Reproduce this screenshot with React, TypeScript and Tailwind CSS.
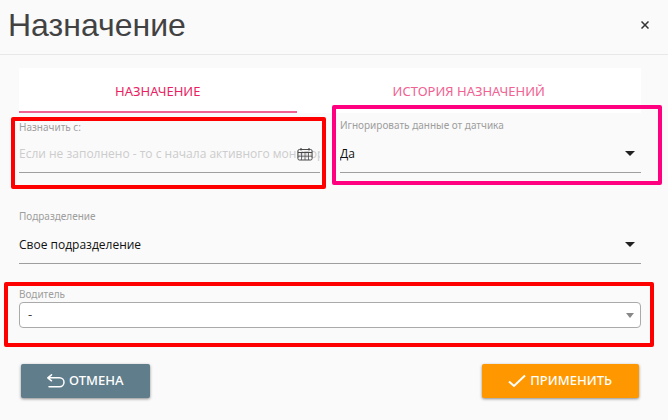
import React, { useState } from 'react';

type SelectFieldProps = {
  id: string;
  label: string;
  options: string[];
};

const SelectField: React.FC<SelectFieldProps> = ({ id, label, options }) => {
  const [value, setValue] = useState(options[0]);

  return (
    <div className="flex flex-col gap-1">
      <label htmlFor={id} className="text-[10px] leading-4 text-[#9e9e9e]">{label}</label>
      <div className="relative">
        <select
          id={id}
          value={value}
          onChange={(e) => setValue(e.target.value)}
          className="block h-9 w-full appearance-none border-b border-[#9e9e9e] bg-transparent pr-7 pb-0.5 font-['Open_Sans',sans-serif] text-[12px] text-[#111] outline-none"
        >
          {options.map((o) => <option key={o}>{o}</option>)}
        </select>
        <svg viewBox="0 0 10 5" className="pointer-events-none absolute top-[14px] right-[6px] h-[5px] w-[10px] fill-[#212121]">
          <path d="M0 0h10L5 5z" />
        </svg>
      </div>
    </div>
  );
};

const CalendarIcon: React.FC = () => (
  <svg viewBox="0 0 16 14" fill="none" stroke="#4a4a4a" className="h-[14px] w-4">
    <rect x="0.9" y="2.5" width="14.2" height="10.5" rx="1.5" />
    <path d="M1 5.5h14" />
    <path d="M1 9.2h14M4.5 5.5v7.5M8 5.5v7.5M11.5 5.5v7.5" strokeWidth="0.8" />
    <path d="M4 1v2.5M12 1v2.5" strokeWidth="1.2" />
  </svg>
);

/* Цветная рамка вокруг поля */
const Highlight: React.FC<{ className: string }> = ({ className }) => (
  <div aria-hidden="true" className={`pointer-events-none absolute rounded-xs border-4 ${className}`} />
);

const App: React.FC = () => {
  const [tab, setTab] = useState(0);
  const [from, setFrom] = useState('');

  return (
    <div className="min-h-screen bg-[#fafafa] font-['Noto_Sans',sans-serif]">
      <header className="flex h-[55px] items-center justify-between border-b border-[#e8e8e8] pr-[18px] pb-1 pl-2">
        <h1 className="font-['Liberation_Sans',sans-serif] text-[32px] leading-10 text-[#424242]">Назначение</h1>
        <button type="button" aria-label="Закрыть" className="p-px">
          <svg viewBox="0 0 8 8" fill="none" stroke="#333" strokeWidth="1.5" className="size-2">
            <path d="M0.5 0.5l7 7M7.5 0.5l-7 7" />
          </svg>
        </button>
      </header>

      <form className="pt-[13px] pr-[27px] pl-[19px]" onSubmit={(e) => e.preventDefault()}>
        {/* Вкладки */}
        <div role="tablist" className="flex h-[45px] bg-white text-[13px]">
          {['НАЗНАЧЕНИЕ', 'ИСТОРИЯ НАЗНАЧЕНИЙ'].map((name, i) => (
            <button
              key={name}
              type="button"
              role="tab"
              aria-selected={tab === i}
              onClick={() => setTab(i)}
              className={tab === i
                ? 'flex-auto border-b-2 border-[#f06292] pt-1 text-[#e91e63]'
                : 'flex-auto border-b-2 border-transparent pt-1 text-[#f06292]'}
            >
              {name}
            </button>
          ))}
        </div>

        <div className="grid grid-cols-2 gap-5 pt-1">
          <div className="relative flex flex-col justify-end gap-1">
            <label htmlFor="from" className="text-[10px] leading-3 text-[#9e9e9e]">Назначить с:</label>
            <div className="relative">
              <input
                id="from"
                value={from}
                onChange={(e) => setFrom(e.target.value)}
                placeholder="Если не заполнено - то с начала активного мониторинга"
                className="block h-9 w-full border-b border-[#9e9e9e] bg-transparent pb-0.5 font-['Open_Sans',sans-serif] text-[12px] outline-none placeholder:text-[#ccc]"
              />
              <button type="button" aria-label="Календарь" className="absolute top-[10px] right-[7px]">
                <CalendarIcon />
              </button>
            </div>
            <Highlight className="top-0 -right-[6px] -bottom-4 -left-2 border-[#ff0000]" />
          </div>

          <div className="relative">
            <SelectField id="ignore" label="Игнорировать данные от датчика" options={['Да', 'Нет']} />
            <Highlight className="-top-3 -right-[21px] -bottom-3 -left-2 border-[#ff0080]" />
          </div>
        </div>

        <div className="pt-[35px]">
          <SelectField id="department" label="Подразделение" options={['Свое подразделение']} />
        </div>

        <div className="relative mt-[22px]">
          <label htmlFor="driver" className="block text-[10px] leading-4 text-[#9e9e9e]">Водитель</label>
          <select
            id="driver"
            className="block h-[26px] w-full appearance-none rounded-sm border border-[#aaa] bg-white px-2 text-[13px] text-[#444] outline-none"
          >
            <option>-</option>
          </select>
          <svg viewBox="0 0 8 5" className="pointer-events-none absolute right-[7px] bottom-[10px] h-[5px] w-2 fill-[#888]">
            <path d="M0 0h8L4 5z" />
          </svg>
          <Highlight className="-top-1 -right-[13px] -bottom-[19px] -left-[15px] border-[#ff0000]" />
        </div>

        <div className="flex justify-between px-[2px] pt-9 pb-[22px] text-[13px] font-medium text-white">
          <button type="button" className="flex h-[34px] items-center gap-1 rounded-xs bg-[#607d8b] pr-[27px] pl-[26px] shadow-[0_1px_3px_rgba(0,0,0,0.45)]">
            <svg viewBox="0 0 18 14" fill="none" stroke="currentColor" strokeWidth="1.5" strokeLinecap="round" strokeLinejoin="round" className="h-[14px] w-[18px]">
              <path d="M4.5 0.8L0.8 3.8l3.7 3M1 3.8h11.5a4.5 4.5 0 0 1 0 9H2" />
            </svg>
            ОТМЕНА
          </button>
          <button type="submit" className="flex h-[34px] items-center gap-1 rounded-xs bg-[#ff9800] pr-[27px] pl-[26px] shadow-[0_1px_3px_rgba(0,0,0,0.45)]">
            <svg viewBox="0 0 18 14" fill="none" stroke="currentColor" strokeWidth="2" className="h-[14px] w-[18px]">
              <path d="M1 7.5L6 12 17 1.5" />
            </svg>
            ПРИМЕНИТЬ
          </button>
        </div>
      </form>
    </div>
  );
};

export default App;
